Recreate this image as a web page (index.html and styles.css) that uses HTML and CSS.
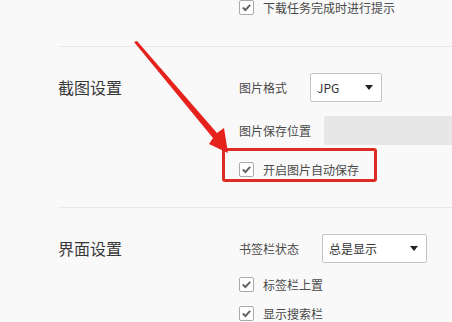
FILE: index.html
```html
<!DOCTYPE html>
<html lang="zh-CN">

<head>
    <meta charset="UTF-8">
    <title>设置</title>
    <link rel="stylesheet" href="styles.css">
</head>

<body>
    <div class="page">
        <div class="section section_top">
            <div class="title"></div>
            <div class="body">
                <label class="check_row">
                    <span class="check"><svg viewBox="0 0 13 13"><path d="M2.8 6.6 L5.4 9 L10.2 3.9" /></svg></span>
                    <span>下载任务完成时进行提示</span>
                </label>
            </div>
        </div>

        <div class="section">
            <div class="title">截图设置</div>
            <div class="body">
                <div class="row">
                    <span class="label">图片格式</span>
                    <div class="select sel_small"><span>JPG</span><i class="tri"></i></div>
                </div>
                <div class="row row_gap">
                    <span class="label label_path">图片保存位置</span>
                    <div class="path_box"></div>
                </div>
                <label class="check_row mark">
                    <span class="check"><svg viewBox="0 0 13 13"><path d="M2.8 6.6 L5.4 9 L10.2 3.9" /></svg></span>
                    <span>开启图片自动保存</span>
                </label>
            </div>
        </div>

        <div class="section">
            <div class="title">界面设置</div>
            <div class="body">
                <div class="row">
                    <span class="label">书签栏状态</span>
                    <div class="select sel_big"><span>总是显示</span><i class="tri"></i></div>
                </div>
                <label class="check_row row_first">
                    <span class="check"><svg viewBox="0 0 13 13"><path d="M2.8 6.6 L5.4 9 L10.2 3.9" /></svg></span>
                    <span>标签栏上置</span>
                </label>
                <label class="check_row row_next">
                    <span class="check"><svg viewBox="0 0 13 13"><path d="M2.8 6.6 L5.4 9 L10.2 3.9" /></svg></span>
                    <span>显示搜索栏</span>
                </label>
            </div>
        </div>

        <!-- 标注箭头 -->
        <svg class="arrow" width="452" height="322" viewBox="0 0 452 322">
            <polygon points="134,42 137,41 217,133 224,128 228,153 209,144 213,138" />
        </svg>
    </div>
</body>

</html>
```

FILE: styles.css
```css
body {
    margin: 0;
    padding: 0;
    background-color: #f9f9f9;
    font-family: "Noto Sans CJK SC", "Microsoft YaHei", sans-serif;
    color: #4a4a4a;
    overflow: hidden;
}

.page {
    position: relative;
    width: 452px;
    height: 322px;
    overflow: hidden;
}

.section {
    display: flex;
    margin-left: 58px;
    border-top: 1px solid #e9e9e9;
    padding-top: 26px;
    padding-bottom: 25px;
}

.section_top {
    border-top: none;
    padding-top: 0;
    padding-bottom: 31px;
}

.title {
    width: 181px;
    flex-shrink: 0;
    font-size: 16px;
    line-height: 29px;
    color: #383838;
}

.body {
    display: flex;
    flex-direction: column;
    width: 300px;
    flex-shrink: 0;
}

.row {
    display: flex;
    align-items: center;
    height: 29px;
    font-size: 12px;
}

.row_gap {
    margin-top: 14px;
}

.label {
    margin-right: 23px;
    white-space: nowrap;
}

.label_path {
    margin-right: 13px;
}

.select {
    box-sizing: border-box;
    height: 29px;
    border: 1px solid #c4c4c4;
    border-radius: 2px;
    background-color: #fff;
    display: flex;
    align-items: center;
    justify-content: space-between;
    padding: 0 8px 0 6px;
    color: #333;
}

.sel_small {
    width: 72px;
}

.sel_big {
    width: 105px;
}

.tri {
    width: 0;
    height: 0;
    border-left: 4px solid transparent;
    border-right: 4px solid transparent;
    border-top: 5px solid #222;
}

.path_box {
    height: 29px;
    width: 200px;
    flex-shrink: 0;
    background-color: #e7e7e7;
    border-radius: 3px;
}

.check_row {
    display: flex;
    align-items: center;
    height: 15px;
    font-size: 12px;
    white-space: nowrap;
}

.row_first {
    margin-top: 7px;
    height: 29px;
}

.row_next {
    height: 29px;
}

.check {
    box-sizing: border-box;
    width: 15px;
    height: 15px;
    border: 1px solid #aaa;
    border-radius: 2px;
    background-color: #fff;
    margin-right: 9px;
    flex-shrink: 0;
}

.check svg {
    display: block;
    width: 13px;
    height: 13px;
}

.check path {
    fill: none;
    stroke: #666;
    stroke-width: 2;
}

/* 红色标注框 */
.mark {
    box-sizing: border-box;
    margin-top: 3px;
    margin-left: -17px;
    width: 155px;
    height: 34px;
    border: 3px solid #de2b25;
    border-radius: 3px;
    padding: 9px 0 0 14px;
}

.arrow {
    position: absolute;
    left: 0;
    top: 0;
    pointer-events: none;
}

.arrow polygon {
    fill: #e6221d;
}
```
